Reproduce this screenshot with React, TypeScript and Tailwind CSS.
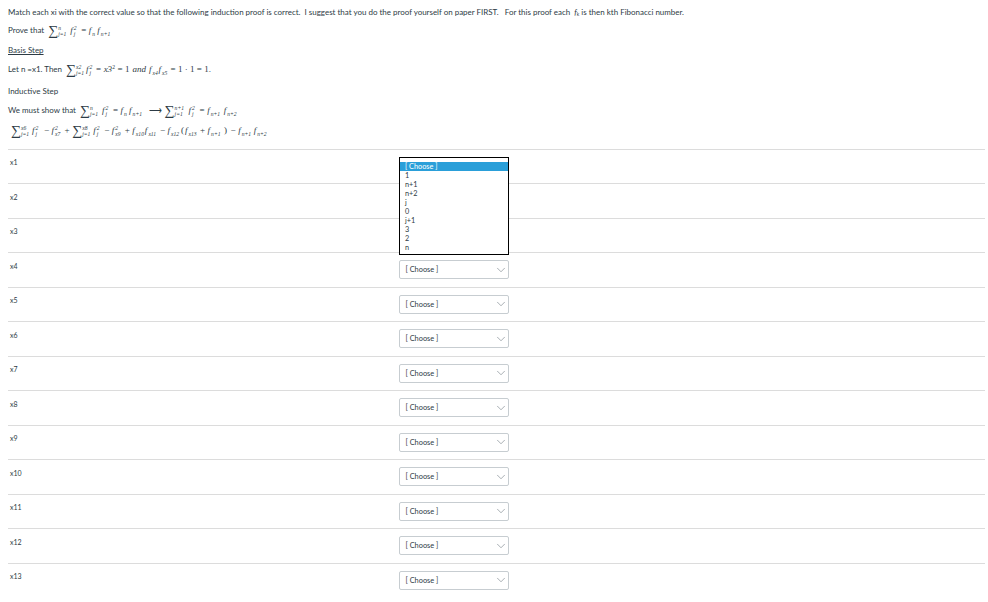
import React from "react";
import { ChevronDown } from "lucide-react";

const M = ({ children, className = "" }: { children: React.ReactNode; className?: string }) => (
  <span className={`italic font-['Liberation_Serif',serif] text-[9px] text-[#2d3b45] ${className}`}>{children}</span>
);

const Scr = ({ t, b, w }: { t?: string; b?: string; w?: string }) => (
  <span className={`inline-flex flex-col justify-between h-[12px] leading-[6px] text-[5.6px] italic font-['Liberation_Serif',serif] ${w ?? ""}`}>
    <span>{t ?? "\u00a0"}</span>
    <span>{b ?? "\u00a0"}</span>
  </span>
);

const Sum = ({ t, b, w }: { t: string; b: string; w?: string }) => (
  <span className="inline-flex items-center mr-[2px]">
    <span className="font-['Liberation_Serif',serif] text-[14px] leading-[12px] not-italic">∑</span>
    <Scr t={t} b={b} w={w} />
  </span>
);

const F = ({ t, b, w }: { t?: string; b: string; w?: string }) => (
  <span className="inline-flex items-center">
    <span className="font-['Liberation_Serif',serif] italic text-[9px] pr-[1px]">f</span>
    <Scr t={t} b={b} w={w} />
  </span>
);

const Op = ({ children }: { children: React.ReactNode }) => <span className="mx-[2.5px] text-[9px]">{children}</span>;

const Eq = ({ children }: { children: React.ReactNode }) => (
  <span className="inline-flex items-center font-['Liberation_Serif',serif] text-[9px] text-[#2d3b45] ml-[2px]">{children}</span>
);

const Line = ({ className = "", children }: { className?: string; children: React.ReactNode }) => (
  <div className={`flex items-center whitespace-pre ${className}`}>{children}</div>
);

const opts = ["1", "n+1", "n+2", "j", "0", "j+1", "3", "2", "n"];
const rows = Array.from({ length: 13 }, (_, i) => `x${i + 1}`);

export default function App() {
  return (
    <div className="relative w-[988px] h-[602px] overflow-hidden bg-white font-['Lato',sans-serif] text-[7.97px] text-[#2d3b45]">
      <div className="pl-[8px] pr-[3px] pt-[8px]">
        <Line className="h-[10px]">
          Match each xi with the correct value so that the following induction proof is correct.  I suggest that you do the proof yourself on paper FIRST.   For this proof each{" "}
          <span className="inline-flex items-center ml-[2px] mr-[2px]"><span className="italic">f</span><sub className="text-[5px] leading-none">k</sub></span>
          is then kth Fibonacci number.
        </Line>
        <Line className="h-[12px] mt-[7px]">
          Prove that <Eq><Sum t="n" b="j=1" w="w-[10px]" /><F t="2" b="j" w="w-[5px]" /><Op>=</Op><F b="n" w="w-[5px]" /><F b="n+1" w="w-[13px]" /></Eq>
        </Line>
        <Line className="h-[10px] mt-[9px]"><span className="underline">Basis Step</span></Line>
        <Line className="h-[14px] mt-[7px]">
          Let n =x1. Then <Eq><Sum t="x2" b="j=1" w="w-[8px]" /><F t="2" b="j" w="w-[4px]" /><Op>=</Op><M>x3</M><sup className="text-[5.6px] not-italic">2</sup><Op>=</Op>1<M className="mx-[3px]">and</M><F b="x4" w="w-[6px]" /><F b="x5" w="w-[6px]" /><Op>=</Op>1 · 1 = 1.</Eq>
        </Line>
        <Line className="h-[10px] mt-[10px]">Inductive Step</Line>
        <Line className="h-[12px] mt-[8px]">
          We must show that <Eq><Sum t="n" b="j=1" w="w-[10px]" /><F t="2" b="j" w="w-[5px]" /><Op>=</Op><F b="n" w="w-[5px]" /><F b="n+1" w="w-[13px]" /><span className="mx-[3px] text-[9px]">⟶</span><Sum t="n+1" b="j=1" w="w-[12px]" /><F t="2" b="j" w="w-[5px]" /><Op>=</Op><F b="n+1" w="w-[13px]" /><F b="n+2" w="w-[13px]" /></Eq>
        </Line>
        <Line className="h-[12px] mt-[8px] pl-[1px]">
          <Eq><Sum t="x6" b="j=1" w="w-[9px]" /><F t="2" b="j" w="w-[6px]" /><Op>−</Op><F t="2" b="x7" w="w-[7px]" /><Op>+</Op><Sum t="x8" b="j=1" w="w-[9px]" /><F t="2" b="j" w="w-[5px]" /><Op>−</Op><F t="2" b="x9" w="w-[7px]" /><Op>+</Op><F b="x10" w="w-[9px]" /><F b="x11" w="w-[9px]" /><Op>−</Op><F b="x12" w="w-[9px]" /><span className="mx-[1px]">(</span><F b="x13" w="w-[9px]" /><Op>+</Op><F b="n+1" w="w-[12px]" /><span className="mx-[1px]">)</span><Op>−</Op><F b="n+1" w="w-[12px]" /><F b="n+2" w="w-[12px]" /></Eq>
        </Line>

        <div className="mt-[11.7px] w-[977px]">
          {rows.map((r, i) => (
            <div key={r} className="flex items-start h-[34.5px] border-t border-[#dcdcdc]">
              <div className="w-[391px] pl-[2px] pt-[7.5px] text-[7px] leading-[10px]">{r}</div>
              <div className={`mt-[7px] w-[110px] h-[19px] flex items-center justify-between pl-[5.5px] pr-[0.5px] border border-[#c7cdd1] rounded-[2px] ${i === 0 ? "invisible" : ""}`}>
                <span className="text-[7.4px]">[ Choose ]</span>
                <ChevronDown className="w-[14px] h-[14px] text-[#6b767d]" strokeWidth={1} />
              </div>
            </div>
          ))}
        </div>
      </div>

      <div className="absolute left-[399px] top-[157px] w-[110px] h-[98px] bg-white border border-black pt-[4px] text-[7.3px]">
        <div className="h-[9px] leading-[9px] bg-[#2a9fd9] text-white pl-[5px]">[ Choose ]</div>
        <div>
          {opts.map((o) => (
            <div key={o} className="h-[9px] leading-[9px] pl-[5px]">{o}</div>
          ))}
        </div>
      </div>
    </div>
  );
}
